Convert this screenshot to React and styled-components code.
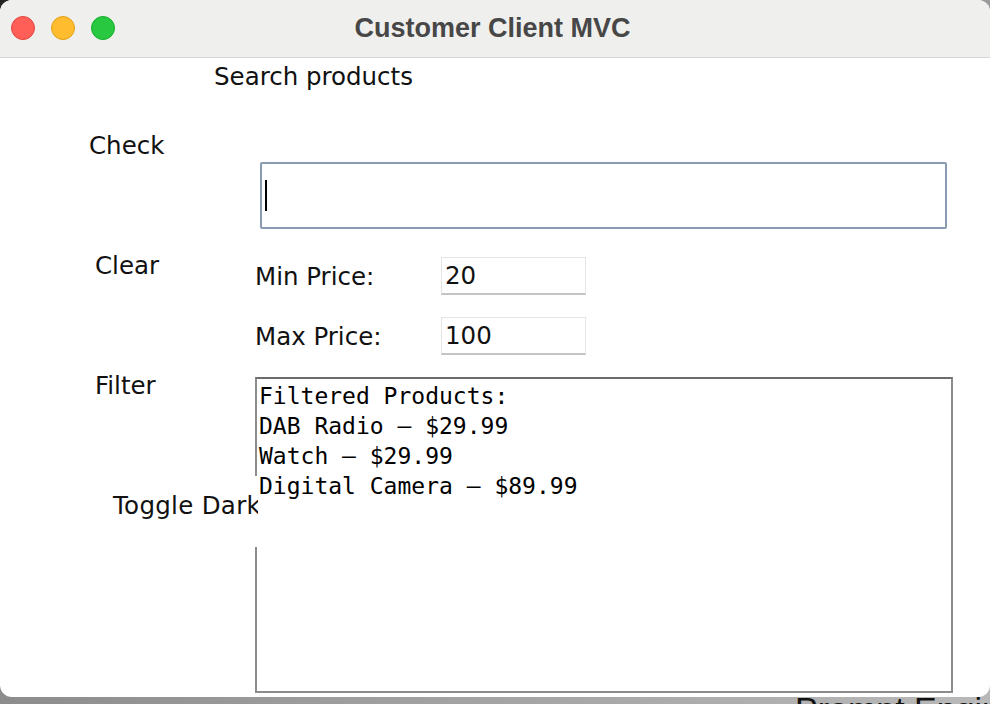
import React from "react";
import styled, { createGlobalStyle } from "styled-components";

const GlobalStyle = createGlobalStyle`
  html, body {
    margin: 0;
    padding: 0;
    width: 990px;
    height: 704px;
    overflow: hidden;
    background: linear-gradient(135deg, #1e1e1e 0%, #6d6d6d 4%, #9c9c9c 60%, #b9b9b9 100%);
  }
  * {
    box-sizing: border-box;
  }
`;

const Desktop = styled.div`
  position: relative;
  width: 990px;
  height: 704px;
  overflow: hidden;
`;

const Screen = styled.div`
  display: flex;
  flex-direction: column;
  height: 704px;
`;

const Window = styled.div`
  width: 990px;
  height: 697px;
  flex-shrink: 0;
  background: #ffffff;
  border-radius: 12px;
  overflow: hidden;
  display: flex;
  flex-direction: column;
`;

const TitleBar = styled.div`
  height: 58px;
  flex-shrink: 0;
  background: #efefee;
  border-bottom: 1px solid #d6d6d6;
  display: flex;
  align-items: center;
  position: relative;
  padding-left: 11px;
  padding-bottom: 2px;
  gap: 16px;
`;

const Light = styled.span`
  width: 24px;
  height: 24px;
  border-radius: 50%;
  background: ${(p) => p.color};
  border: 1px solid ${(p) => p.rim};
`;

const Title = styled.div`
  position: absolute;
  inset: 0;
  display: flex;
  align-items: center;
  justify-content: center;
  padding-bottom: 1px;
  padding-right: 5px;
  font-family: "Liberation Sans", Arial, sans-serif;
  font-weight: bold;
  font-size: 27px;
  color: #474747;
  pointer-events: none;
`;

const Body = styled.div`
  flex: 1;
  display: flex;
  flex-direction: column;
  font-family: "DejaVu Sans", "Liberation Sans", sans-serif;
  font-size: 24.5px;
  color: #111;
`;

const Heading = styled.div`
  height: 22px;
  margin-top: 5px;
  padding-left: 214px;
  line-height: 27px;
`;

const Columns = styled.div`
  display: grid;
  grid-template-columns: 258px 1fr;
  flex: 1;
`;

const ButtonColumn = styled.div`
  position: relative;
  z-index: 1;
  display: flex;
  flex-direction: column;
`;

const FlatButton = styled.div`
  height: 120px;
  display: flex;
  align-items: center;
  padding-left: ${(p) => p.indent}px;
  white-space: nowrap;
  overflow: hidden;
`;

const ToggleButton = styled.div`
  margin-top: 31px;
  height: 71px;
  background: #ffffff;
  padding-top: 15px;
  padding-left: 113px;
  line-height: 29px;
  letter-spacing: 0.3px;
  white-space: nowrap;
  overflow: hidden;
`;

const FormColumn = styled.div`
  margin-left: -3px;
  display: flex;
  flex-direction: column;
  padding-right: 37px;
`;

const SearchInput = styled.div`
  margin-top: 77px;
  margin-left: 5px;
  margin-right: 6px;
  height: 67px;
  border: 2px solid #8a9ab0;
  border-radius: 2px;
  display: flex;
  align-items: center;
  padding-left: 3px;
`;

const Caret = styled.span`
  width: 2px;
  height: 31px;
  background: #000;
`;

const PriceRow = styled.div`
  display: flex;
  align-items: center;
  height: 38px;
  margin-top: ${(p) => p.gap}px;
`;

const PriceLabel = styled.div`
  width: 186px;
`;

const PriceField = styled.div`
  width: 145px;
  height: 38px;
  border: 1px solid #e4e4e4;
  border-bottom: 2px solid #c4c4c4;
  display: flex;
  align-items: center;
  padding-left: 3px;
`;

const Output = styled.pre`
  margin: 22px 0 0 0;
  height: 316px;
  border: 2px solid #8c8c8c;
  border-top-color: #6c6c6c;
  padding: 2px 0 0 2px;
  font-family: "DejaVu Sans Mono", "Liberation Mono", monospace;
  font-size: 23px;
  line-height: 30px;
  color: #000;
  background: #fff;
`;

const Dock = styled.div`
  flex: 1;
  display: flex;
  overflow: hidden;
  padding-left: 795px;
`;

const DockText = styled.div`
  font-family: "Liberation Sans", Arial, sans-serif;
  font-size: 34px;
  line-height: 34px;
  color: #111;
  margin-top: -5px;
  white-space: nowrap;
`;

const products = [
  { name: "DAB Radio", price: "29.99" },
  { name: "Watch", price: "29.99" },
  { name: "Digital Camera", price: "89.99" },
];

const App = () => {
  const lines = [
    "Filtered Products:",
    ...products.map((p) => `${p.name} \u2013 $${p.price}`),
  ];

  return (
    <>
      <GlobalStyle />
      <Desktop>
        <Screen>
          <Window>
            <TitleBar>
              <Light color="#ff5f57" rim="#e2463f" />
              <Light color="#febc2e" rim="#e1a116" />
              <Light color="#28c840" rim="#14ae2a" />
              <Title>Customer Client MVC</Title>
            </TitleBar>
            <Body>
              <Heading>Search products</Heading>
              <Columns>
                <ButtonColumn>
                  <FlatButton indent={89}>Check</FlatButton>
                  <FlatButton indent={95}>Clear</FlatButton>
                  <FlatButton indent={95}>Filter</FlatButton>
                  <ToggleButton>Toggle Dark Mode</ToggleButton>
                </ButtonColumn>
                <FormColumn>
                  <SearchInput>
                    <Caret />
                  </SearchInput>
                  <PriceRow gap={28}>
                    <PriceLabel>Min Price:</PriceLabel>
                    <PriceField>20</PriceField>
                  </PriceRow>
                  <PriceRow gap={22}>
                    <PriceLabel>Max Price:</PriceLabel>
                    <PriceField>100</PriceField>
                  </PriceRow>
                  <Output>{lines.join("\n")}</Output>
                </FormColumn>
              </Columns>
            </Body>
          </Window>
          <Dock>
            <DockText>Prompt Engineer</DockText>
          </Dock>
        </Screen>
      </Desktop>
    </>
  );
};

export default App;
